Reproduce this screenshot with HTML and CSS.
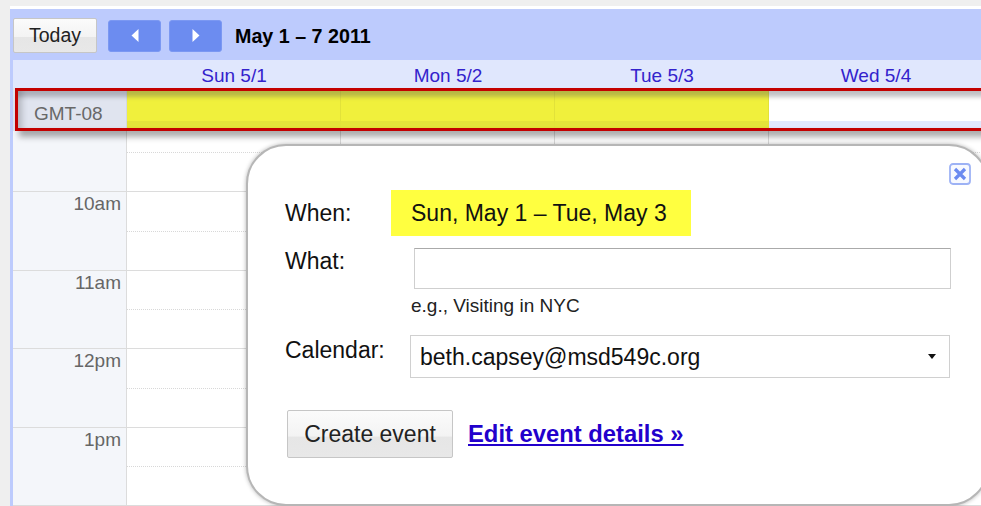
FILE: index.html
```html
<!DOCTYPE html>
<html lang="en">
<head>
<meta charset="utf-8">
<title>Calendar - Week of May 1, 2011</title>
<link rel="stylesheet" href="styles.css">
</head>
<body>
<div class="page">
  <div class="cal">
    <div class="toolbar">
      <button class="btn today">Today</button>
      <button class="nav prev" aria-label="Previous week">
        <svg width="8" height="13" viewBox="0 0 8 13"><polygon points="7.5,0 7.5,13 0.5,6.5" fill="#fff"/></svg>
      </button>
      <button class="nav next" aria-label="Next week">
        <svg width="8" height="13" viewBox="0 0 8 13"><polygon points="0.5,0 0.5,13 7.5,6.5" fill="#fff"/></svg>
      </button>
      <span class="range">May 1 – 7 2011</span>
    </div>

    <div class="days">
      <div class="gutter"></div>
      <div class="dayname">Sun 5/1</div>
      <div class="dayname">Mon 5/2</div>
      <div class="dayname">Tue 5/3</div>
      <div class="dayname">Wed 5/4</div>
    </div>

    <div class="allday">
      <div class="tz">GMT-08</div>
      <div class="adcell sel"></div>
      <div class="adcell sel"></div>
      <div class="adcell sel"></div>
      <div class="adcell"></div>
    </div>

    <div class="grid">
      <div class="times">
        <div class="hour first"></div>
        <div class="hour">10am</div>
        <div class="hour">11am</div>
        <div class="hour">12pm</div>
        <div class="hour">1pm</div>
      </div>
      <div class="col"><div class="slot lead"></div><div class="slot top"></div><div class="slot half"></div><div class="slot top"></div><div class="slot half"></div><div class="slot top"></div><div class="slot half"></div><div class="slot top"></div><div class="slot half"></div><div class="slot top"></div></div>
      <div class="col"><div class="slot lead"></div><div class="slot top"></div><div class="slot half"></div><div class="slot top"></div><div class="slot half"></div><div class="slot top"></div><div class="slot half"></div><div class="slot top"></div><div class="slot half"></div><div class="slot top"></div></div>
      <div class="col"><div class="slot lead"></div><div class="slot top"></div><div class="slot half"></div><div class="slot top"></div><div class="slot half"></div><div class="slot top"></div><div class="slot half"></div><div class="slot top"></div><div class="slot half"></div><div class="slot top"></div></div>
      <div class="col"><div class="slot lead"></div><div class="slot top"></div><div class="slot half"></div><div class="slot top"></div><div class="slot half"></div><div class="slot top"></div><div class="slot half"></div><div class="slot top"></div><div class="slot half"></div><div class="slot top"></div></div>
    </div>
  </div>

  <!-- highlight frame drawn around the all-day row -->
  <div class="mark"></div>

  <!-- quick-add bubble -->
  <div class="bubble">
    <div class="bubble-top">
      <button class="close" aria-label="Close">
        <svg width="22" height="22" viewBox="0 0 22 22">
          <rect x="1" y="1" width="20" height="20" rx="3" fill="#f7f9ff" stroke="#9db2f5" stroke-width="1.8"/>
          <path d="M6 6 L16 16 M16 6 L6 16" stroke="#6a8af0" stroke-width="3.2"/>
        </svg>
      </button>
    </div>
    <div class="row when-row">
      <div class="lbl">When:</div>
      <div class="when">Sun, May 1 – Tue, May 3</div>
    </div>
    <div class="row what-row">
      <div class="lbl">What:</div>
      <input class="what" type="text" aria-label="What">
    </div>
    <div class="hint">e.g., Visiting in NYC</div>
    <div class="row cal-row">
      <div class="lbl">Calendar:</div>
      <div class="select">
        <span>beth.capsey@msd549c.org</span>
        <svg width="8" height="5" viewBox="0 0 8 5"><polygon points="0,0 8,0 4,5" fill="#111"/></svg>
      </div>
    </div>
    <div class="actions">
      <button class="btn create">Create event</button>
      <a class="edit" href="#">Edit event details »</a>
    </div>
  </div>
</div>
</body>
</html>
```

FILE: styles.css
```css
html, body {
  margin: 0;
  padding: 0;
  overflow: hidden;
}

body {
  background: #efefef;
  font-family: "Liberation Sans", Arial, sans-serif;
  color: #222;
}

.page {
  position: relative;
  width: 981px;
  height: 506px;
  overflow: hidden;
}

/* calendar frame */
.cal {
  margin: 6px 0 0 10px;
  border-top: 3px solid #fff;
  background: #bdcbfd;
  padding-left: 3px;
  width: 973px;
}

.toolbar {
  height: 51px;
  box-sizing: border-box;
  padding-top: 2px;
  display: flex;
  align-items: center;
}

.btn {
  font-family: inherit;
  border: 1px solid #c6c6c6;
  border-radius: 2px;
  background: linear-gradient(#fbfbfb 0%, #f3f3f3 55%, #e6e6e6 56%, #e8e8e8 100%);
  color: #222;
  padding: 0;
  cursor: pointer;
}

.today {
  width: 84px;
  height: 35px;
  font-size: 19.5px;
}

.nav {
  width: 53px;
  height: 32px;
  border: 1px solid #7b98f2;
  border-radius: 3px;
  background: #6c8cf0;
  padding: 0;
  display: flex;
  align-items: center;
  justify-content: center;
}

.prev { margin-left: 11px; }
.next { margin-left: 8px; }

.range {
  margin-left: 13px;
  font-size: 19.7px;
  font-weight: bold;
  color: #000;
  padding-top: 2px;
}

/* day names */
.days {
  display: flex;
  height: 28px;
  background: #e0e7fd;
}

.gutter { width: 114px; flex: none; }

.dayname {
  width: 214px;
  flex: none;
  text-align: center;
  font-size: 19px;
  line-height: 22px;
  padding-top: 5px;
  color: #3322cc;
}

/* all-day row */
.allday {
  display: flex;
  height: 43px;
  background: #fff;
}

.tz {
  width: 114px;
  flex: none;
  box-sizing: border-box;
  background: #e0e4ef;
  color: #686868;
  font-size: 19px;
  line-height: 22px;
  padding: 15px 0 0 21px;
  border-right: 1px solid #d4d8e2;
}

.adcell {
  width: 214px;
  flex: none;
  box-sizing: border-box;
  border-right: 1px solid #dcdcdc;
  background: #fff;
  box-shadow: inset 0 -10px 0 #e1e8fd;
}

.adcell.sel {
  background: #f0f03c;
  border-right-color: #e2e23a;
  box-shadow: inset 0 -10px 0 #e4e43a;
}

/* time grid */
.grid {
  display: flex;
  background: #fff;
}

.times {
  width: 114px;
  flex: none;
  box-sizing: border-box;
  background: #f4f6fa;
  border-right: 1px solid #dcdcdc;
}

.hour {
  box-sizing: border-box;
  height: 78.5px;
  border-bottom: 1px solid #dcdcdc;
  text-align: right;
  padding: 1px 5px 0 0;
  font-size: 19px;
  line-height: 22px;
  color: #666;
}

.hour.first { height: 61px; }

.col {
  width: 214px;
  flex: none;
  box-sizing: border-box;
  border-right: 1px solid #dcdcdc;
}

.slot {
  box-sizing: border-box;
  height: 39.25px;
}

.slot.lead {
  height: 22px;
  border-bottom: 1px dotted #d8d8d8;
}

.slot.top { border-bottom: 1px solid #dcdcdc; }
.slot.half { border-bottom: 1px dotted #d8d8d8; }

/* red highlight frame */
.mark {
  position: absolute;
  left: 15px;
  top: 88px;
  width: 990px;
  height: 43px;
  box-sizing: border-box;
  border: 3.5px solid #c30000;
  box-shadow: inset 0 9px 4px -3px rgba(80, 80, 90, 0.35),
              inset 8px 0 6px -4px rgba(0, 0, 0, 0.2),
              4px 6px 6px rgba(0, 0, 0, 0.32);
}

/* quick-add bubble */
.bubble {
  position: absolute;
  left: 246px;
  top: 144px;
  width: 743px;
  height: 362px;
  box-sizing: border-box;
  border: 2px solid #b6b6b6;
  border-radius: 40px;
  background: #fff;
  box-shadow: 0 0 4px rgba(0, 0, 0, 0.3);
  padding: 17px 16px 0 37px;
}

.bubble-top {
  display: flex;
  justify-content: flex-end;
  height: 21px;
}

.close {
  border: 0;
  background: none;
  padding: 0;
  width: 22px;
  height: 22px;
  display: block;
}

.close svg { display: block; }

.row {
  display: flex;
}

.lbl {
  width: 106px;
  flex: none;
  font-size: 23px;
  line-height: 26px;
  color: #111;
}

.when-row {
  margin-top: 6px;
  align-items: center;
}

.when {
  width: 300px;
  height: 46px;
  box-sizing: border-box;
  padding-left: 20px;
  line-height: 46px;
  font-size: 23px;
  background: #ffff40;
  color: #111;
}

.what-row { margin-top: 12px; }

.what {
  margin: 0 0 0 23px;
  width: 537px;
  height: 41px;
  box-sizing: border-box;
  border: 1px solid #cfcfcf;
  border-top-color: #aaa;
  padding: 0 8px;
  font-family: inherit;
  font-size: 23px;
  outline: none;
}

.hint {
  margin: 6px 0 0 126px;
  font-size: 19px;
  line-height: 22px;
  color: #222;
}

.cal-row { margin-top: 18px; }
.cal-row .lbl { margin-top: 2px; }

.select {
  margin-left: 19px;
  width: 540px;
  height: 43px;
  box-sizing: border-box;
  border: 1px solid #d0d0d0;
  background: #fff;
  display: flex;
  align-items: center;
  justify-content: space-between;
  padding: 2px 13px 0 9px;
  font-size: 23px;
  color: #111;
}

.select svg { margin-top: -2px; }

.actions {
  margin-top: 32px;
  display: flex;
  align-items: center;
}

.create {
  margin-left: 2px;
  width: 166px;
  height: 48px;
  font-size: 23px;
  color: #222;
}

.edit {
  margin-left: 15px;
  font-size: 23.8px;
  font-weight: bold;
  color: #2200cc;
  text-decoration: underline;
}
```
